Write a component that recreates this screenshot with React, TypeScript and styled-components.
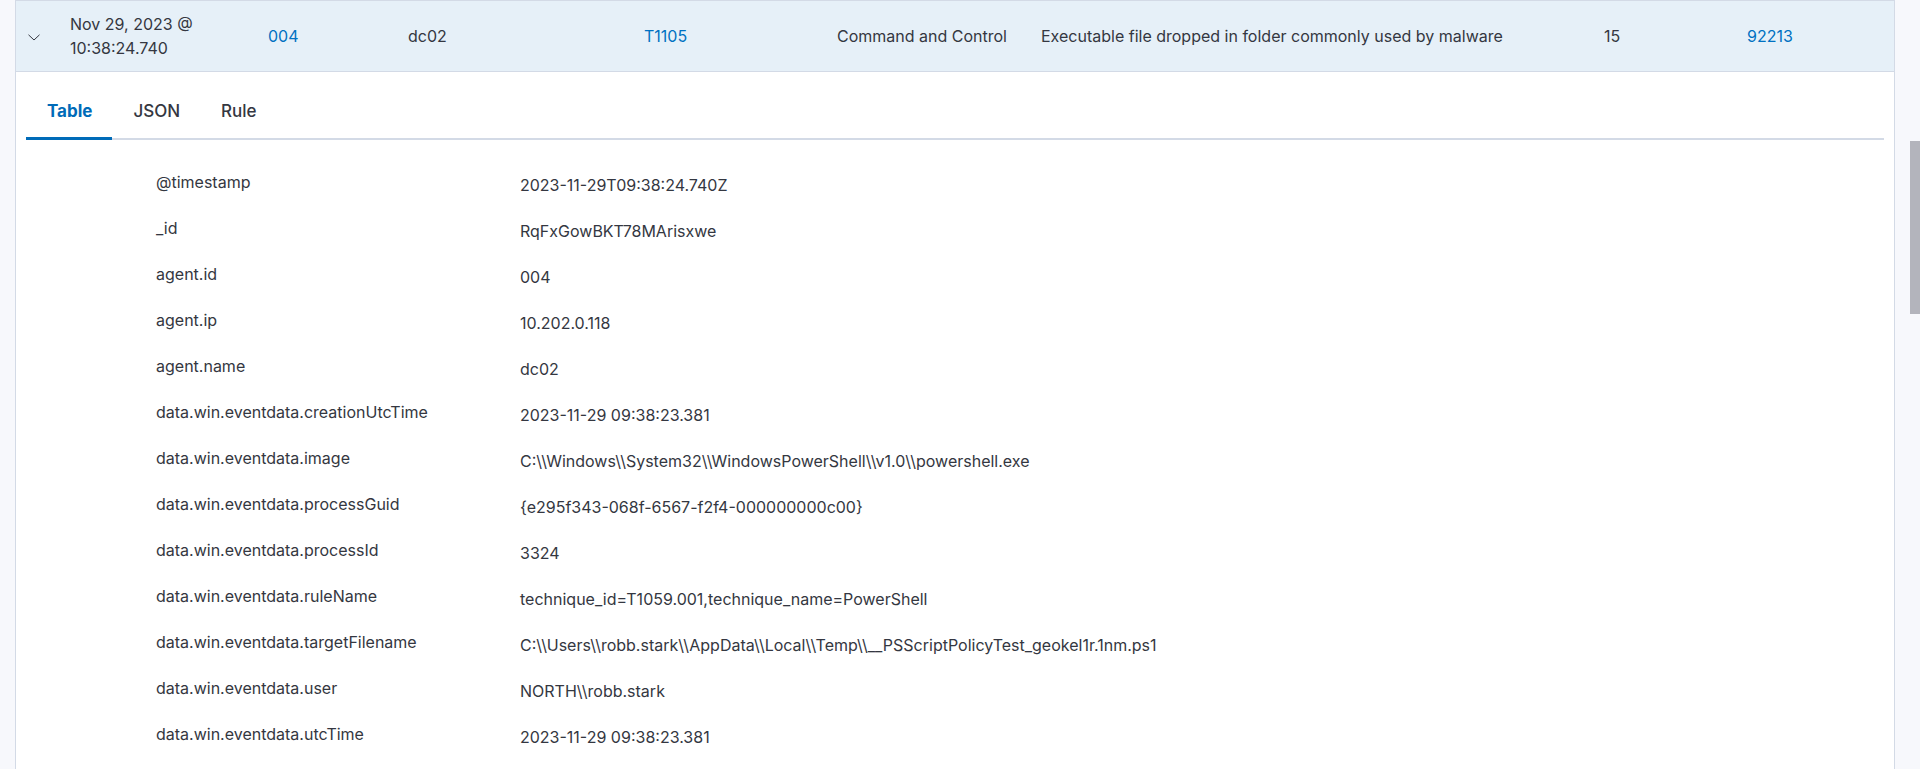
import React from "react";
import styled, { createGlobalStyle } from "styled-components";

const GlobalStyle = createGlobalStyle`
  html, body {
    margin: 0;
    padding: 0;
    background: #f7f8fc;
    font-family: Inter, "Noto Sans", "Liberation Sans", sans-serif;
    color: #343741;
  }
  * {
    box-sizing: border-box;
  }
`;

const columns = [
  { key: "timestamp", value: "Nov 29, 2023 @ 10:38:24.740", link: false, wrap: true },
  { key: "agentId", value: "004", link: true, wrap: false },
  { key: "agentName", value: "dc02", link: false, wrap: false },
  { key: "technique", value: "T1105", link: true, wrap: false },
  { key: "tactic", value: "Command and Control", link: false, wrap: false },
  { key: "description", value: "Executable file dropped in folder commonly used by malware", link: false, wrap: false },
  { key: "level", value: "15", link: false, wrap: false },
  { key: "ruleId", value: "92213", link: true, wrap: false },
];

const fields: [string, string][] = [
  ["@timestamp", "2023-11-29T09:38:24.740Z"],
  ["_id", "RqFxGowBKT78MArisxwe"],
  ["agent.id", "004"],
  ["agent.ip", "10.202.0.118"],
  ["agent.name", "dc02"],
  ["data.win.eventdata.creationUtcTime", "2023-11-29 09:38:23.381"],
  ["data.win.eventdata.image", "C:\\\\Windows\\\\System32\\\\WindowsPowerShell\\\\v1.0\\\\powershell.exe"],
  ["data.win.eventdata.processGuid", "{e295f343-068f-6567-f2f4-000000000c00}"],
  ["data.win.eventdata.processId", "3324"],
  ["data.win.eventdata.ruleName", "technique_id=T1059.001,technique_name=PowerShell"],
  ["data.win.eventdata.targetFilename", "C:\\\\Users\\\\robb.stark\\\\AppData\\\\Local\\\\Temp\\\\__PSScriptPolicyTest_geokel1r.1nm.ps1"],
  ["data.win.eventdata.user", "NORTH\\\\robb.stark"],
  ["data.win.eventdata.utcTime", "2023-11-29 09:38:23.381"],
];

const tabs = ["Table", "JSON", "Rule"];

const App = () => {
  return (
    <Page>
      <GlobalStyle />
      <Panel>
        <EventRow>
          <ExpandCell>
            <svg width="12" height="7" viewBox="0 0 12 7">
              <polyline points="0.5,0.8 6,6 11.5,0.8" fill="none" stroke="#343741" strokeWidth="1" />
            </svg>
          </ExpandCell>
          {columns.map((c) => (
            <Cell key={c.key} $link={c.link} $wrap={c.wrap}>
              {c.value}
            </Cell>
          ))}
        </EventRow>
        <Details>
          <TabList>
            {tabs.map((t, i) => (
              <Tab key={t} $active={i === 0}>
                {t}
              </Tab>
            ))}
          </TabList>
          <FieldTable>
            {fields.map(([k, v]) => (
              <FieldRow key={k}>
                <FieldName>{k}</FieldName>
                <FieldValue>{v}</FieldValue>
              </FieldRow>
            ))}
          </FieldTable>
        </Details>
      </Panel>
      <Gutter>
        <Thumb />
      </Gutter>
    </Page>
  );
};

const Page = styled.div`
  display: flex;
  height: 100vh;
  overflow: hidden;
  padding-left: 15px;
`;

const Panel = styled.div`
  width: 1880px;
  flex-shrink: 0;
  background: #ffffff;
  border-left: 1px solid #d3dae6;
  border-right: 1px solid #d3dae6;
`;

const EventRow = styled.div`
  display: grid;
  grid-template-columns: 54px 198px 140px 236px 193px 204px 563px 143px 1fr;
  align-items: center;
  height: 72px;
  background: #e6f0f8;
  border-top: 1px solid #d3dae6;
  border-bottom: 1px solid #d3dae6;
  font-size: 16px;
  line-height: 24px;
`;

const ExpandCell = styled.div`
  display: flex;
  align-items: center;
  padding-left: 12px;
  padding-top: 2px;
`;

const Cell = styled.div<{ $link: boolean; $wrap: boolean }>`
  padding-right: ${(p) => (p.$wrap ? "40px" : "8px")};
  white-space: ${(p) => (p.$wrap ? "normal" : "nowrap")};
  color: ${(p) => (p.$link ? "#0071c2" : "#343741")};
`;

const Details = styled.div`
  padding: 12px 10px 0;
`;

const TabList = styled.div`
  display: flex;
  border-bottom: 2px solid #d3dae6;
`;

const Tab = styled.div<{ $active: boolean }>`
  height: 56px;
  margin-bottom: -2px;
  padding: 0 20px 0 21px;
  display: flex;
  align-items: center;
  font-size: 17px;
  font-weight: ${(p) => (p.$active ? 700 : 500)};
  color: ${(p) => (p.$active ? "#006bb8" : "#343741")};
  border-bottom: 3px solid ${(p) => (p.$active ? "#006bb8" : "transparent")};
`;

const FieldTable = styled.div`
  padding: 21px 0 0 130px;
`;

const FieldRow = styled.div`
  display: grid;
  grid-template-columns: 364px 1fr;
  align-items: start;
  padding: 9px 0 10px;
  font-size: 16px;
  line-height: 24px;
`;

const FieldName = styled.div`
  color: #343741;
`;

const FieldValue = styled.div`
  color: #343741;
  padding-top: 3px;
`;

const Gutter = styled.div`
  flex: 1;
  display: flex;
  justify-content: flex-end;
  padding-top: 141px;
`;

const Thumb = styled.div`
  width: 10px;
  height: 173px;
  background: #b3b4bc;
`;

export default App;
